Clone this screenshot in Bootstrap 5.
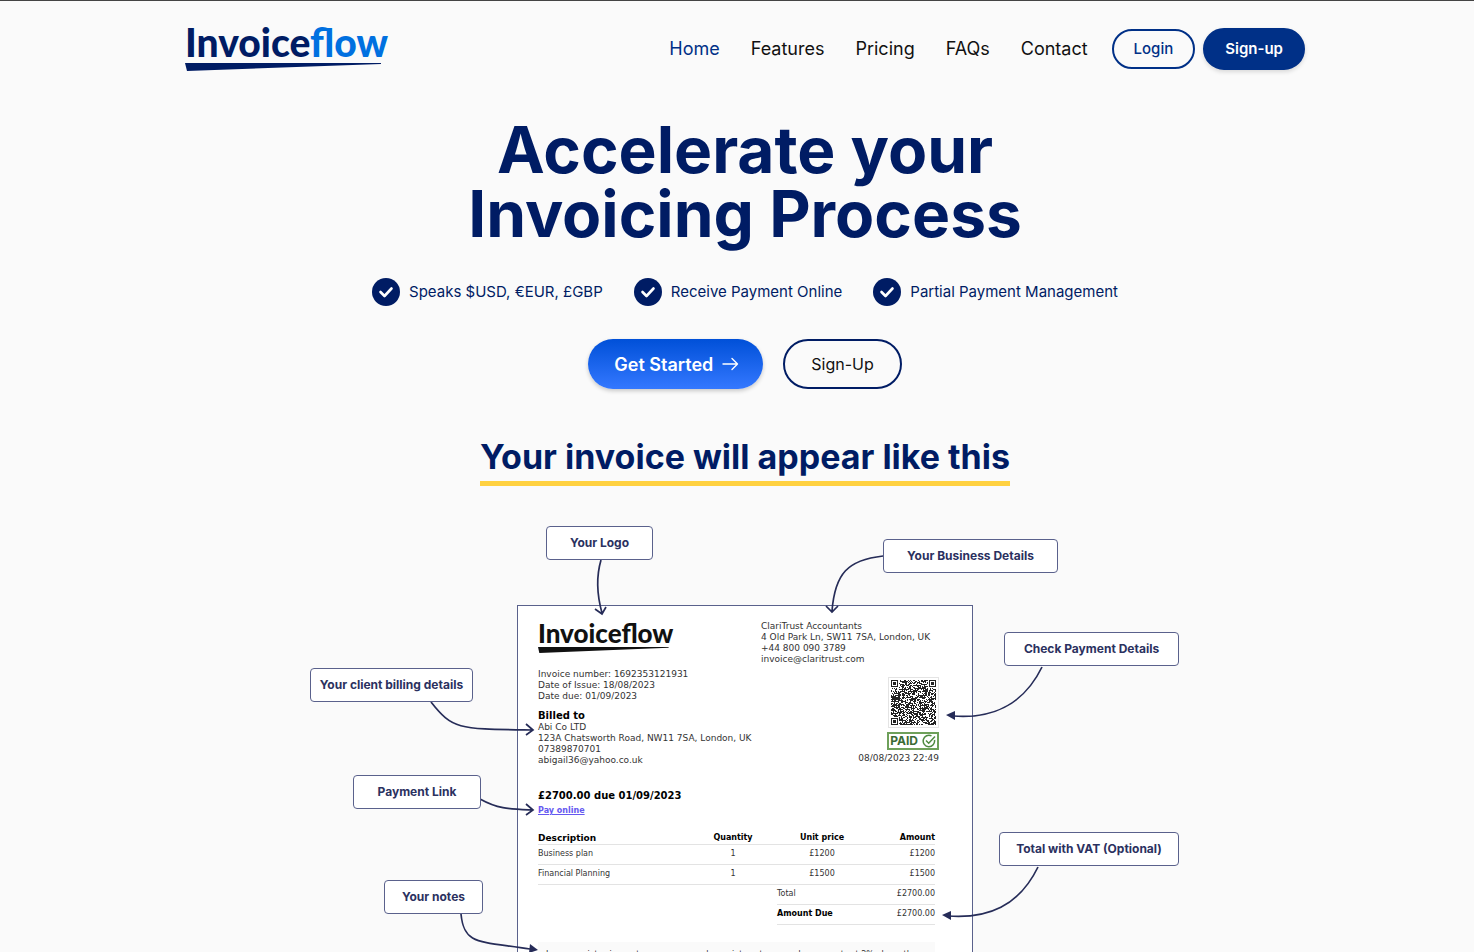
<!DOCTYPE html>
<html lang="en">
<head>
<meta charset="utf-8">
<meta name="viewport" content="width=device-width, initial-scale=1">
<title>Invoiceflow</title>
<link href="https://cdn.jsdelivr.net/npm/bootstrap@5.3.0/dist/css/bootstrap.min.css" rel="stylesheet">
<style>
:root{--navy:#001c64;--royal:#003087;--ink:#2b3160}
body{font-family:Inter,sans-serif;background:#fafafa;color:#111;border-top:1px solid #444;padding-left:16px;overflow-x:hidden}
.wrap{max-width:1120px}
.logo{font:900 39px/34px Lato,sans-serif;color:var(--navy);text-decoration:none;display:inline-block}
.logo svg{display:block;width:0;min-width:100%;height:8px;margin:4px 0 2px}
.logo span{color:#0070e0}
.site-nav{gap:31px}
.site-nav .nav-link{font-size:18px;line-height:24px;padding:0;color:#111}
.site-nav .nav-link.active{color:var(--royal)}
.pill{border-radius:32px;border:2px solid var(--royal);font-size:15px;line-height:20px;font-weight:500;color:var(--royal);padding:8px 20px}
.pill-solid{background:var(--royal);color:#fff;font-weight:600;padding:9px 20px;box-shadow:0 2px 4px #0002}
h1{font-size:64px;line-height:64px;font-weight:700;color:var(--navy);margin:45px 0 24px}
.points{font-size:15px;line-height:28px;color:var(--navy);gap:31px}
.points li{display:flex;gap:9px}
.actions{gap:20px;margin-top:33px}
.start{border:0;border-radius:32px;font-size:18px;font-weight:600;color:#fff;background:linear-gradient(#0050d8,#3478ff);height:50px;padding:0 24px 0 26px;box-shadow:0 2px 4px #0003}
.signup{border:2px solid var(--navy);border-radius:32px;background:none;font-size:16px;height:50px;padding:0 26px;color:#111}
h2{font-size:34px;line-height:44px;font-weight:700;color:var(--navy);border-bottom:5px solid #ffd140;padding-bottom:2px;margin:46px 0 40px}
.diagram{width:870px;padding:79px 207px 24px}
.sheet{background:#fff;border:1px solid #5a618c;padding:15px 37px 24px 20px;font:9px/11px "DejaVu Sans",sans-serif;color:#333}
.sheet .logo{font-size:26px;line-height:24px;color:#111}
.sheet .logo svg{height:6px;margin:2px 0 0}
.sheet strong{color:#000;font-size:10px}
.right-col{width:178px;margin-right:-4px}
.qr{width:51px;height:51px;border:1px solid #e4e4e4;padding:2px;margin-top:12px}
.paid{border:2px solid #6ea05a;color:#3b6b35;font:700 12px/14px Inter,sans-serif;padding:0 1px;margin:4px 0 3px}
.pay{color:#6558f0;font-size:8px;font-weight:700;display:block;margin:3px 0 16px}
.sheet table{font-size:8px;line-height:10px;width:100%}
.col-desc{width:151px}.col-qty{width:88px}.col-price{width:90px}
.sheet th{color:#000;padding:0;height:12px}
.sheet .desc{font-size:9px}
.sheet td,.sheet tbody th{height:20px;padding:0;vertical-align:middle}
.sheet tr>*{border-bottom:1px solid #e3e3e3}
.sheet .none{border:0}
.notes{background:#fafafa;font-size:8px;line-height:12px;padding:7px 8px;margin:17px 0 0}
.tag{position:absolute;height:34px;background:#fff;border:1px solid #5a618c;border-radius:4px;color:var(--ink);font-size:12px;font-weight:700;line-height:32px;text-align:center;white-space:nowrap}
.t-logo{left:236px;top:0;width:107px}.t-business{left:573px;top:13px;width:175px}.t-check{left:694px;top:106px;width:175px}.t-client{left:0;top:142px;width:163px}.t-link{left:43px;top:249px;width:128px}.t-total{left:689px;top:306px;width:180px}.t-notes{left:74px;top:354px;width:99px}
.arrows{position:absolute;left:0;top:0;pointer-events:none}
</style>
</head>
<body>
<header class="wrap mx-auto d-flex align-items-center justify-content-between pt-4">
  <a class="logo" href="#">Invoice<span>flow</span>
    <svg viewBox="0 0 200 8" preserveAspectRatio="none" aria-hidden="true"><path d="M0 0H193V1L2 8Z" fill="#001c64"/></svg></a>
  <div class="d-flex align-items-center gap-4">
    <nav class="site-nav nav" aria-label="Main">
      <a class="nav-link active" href="#">Home</a><a class="nav-link" href="#">Features</a><a class="nav-link" href="#">Pricing</a><a class="nav-link" href="#">FAQs</a><a class="nav-link" href="#">Contact</a>
    </nav>
    <div class="d-flex align-items-center gap-2"><button class="btn pill">Login</button><button class="btn pill pill-solid">Sign-up</button></div>
  </div>
</header>
<main class="wrap mx-auto d-flex flex-column align-items-center">
  <h1 class="text-center">Accelerate your<br>Invoicing Process</h1>
  <ul class="points list-unstyled d-flex flex-wrap justify-content-center mb-0 mt-2">
    <li><svg width="28" height="28" viewBox="0 0 28 28"><circle cx="14" cy="14" r="14" fill="#001c64"/><path d="M8.500 14l4 4 7-7.500" fill="none" stroke="#fff" stroke-width="2.600" stroke-linecap="round" stroke-linejoin="round"/></svg>Speaks $USD, €EUR, £GBP</li>
    <li><svg width="28" height="28" viewBox="0 0 28 28"><circle cx="14" cy="14" r="14" fill="#001c64"/><path d="M8.500 14l4 4 7-7.500" fill="none" stroke="#fff" stroke-width="2.600" stroke-linecap="round" stroke-linejoin="round"/></svg>Receive Payment Online</li>
    <li><svg width="28" height="28" viewBox="0 0 28 28"><circle cx="14" cy="14" r="14" fill="#001c64"/><path d="M8.500 14l4 4 7-7.500" fill="none" stroke="#fff" stroke-width="2.600" stroke-linecap="round" stroke-linejoin="round"/></svg>Partial Payment Management</li>
  </ul>
  <div class="actions d-flex">
    <button class="start d-flex align-items-center gap-2">Get Started<svg width="18" height="16" viewBox="0 0 18 16" fill="none" stroke="#fff" stroke-width="1.400" stroke-linecap="round" stroke-linejoin="round"><path d="M2 8h14M11 2.500L16.500 8 11 13.500"/></svg></button>
    <button class="signup">Sign-Up</button>
  </div>
  <h2>Your invoice will appear like this</h2>
  <div class="diagram position-relative">
    <article class="sheet">
      <div class="d-flex justify-content-between">
        <div>
          <div class="logo">Invoiceflow<svg viewBox="0 0 200 8" preserveAspectRatio="none" aria-hidden="true"><path d="M0 0H193V1L2 8Z" fill="#111"/></svg></div>
          <div class="mt-3">Invoice number: 1692353121931<br>Date of Issue: 18/08/2023<br>Date due: 01/09/2023</div>
          <div class="mt-2 text-nowrap"><strong>Billed to</strong><br>Abi Co LTD<br>123A Chatsworth Road, NW11 7SA, London, UK<br>07389870701<br>abigail36@yahoo.co.uk</div>
        </div>
        <div class="right-col flex-shrink-0 d-flex flex-column align-items-end text-nowrap">
          <div class="w-100">ClariTrust Accountants<br>4 Old Park Ln, SW11 7SA, London, UK<br>+44 800 090 3789<br>invoice@claritrust.com</div>
          <svg class="qr" viewBox="0 0 45 45" shape-rendering="crispEdges" role="img" aria-label="Payment QR code"><path id="qr" fill="#222"/></svg>
          <div class="paid d-flex gap-1 align-items-center">PAID<svg width="14" height="14" viewBox="0 0 14 14" fill="none" stroke="#4f8a41" stroke-width="1.500"><path d="M12.500 6A5.700 5.700 0 1 1 9.500 1.900M4 6.500l2.700 2.700L13 2.500"/></svg></div>
          <div>08/08/2023 22:49</div>
        </div>
      </div>
      <div class="mt-4"><strong>£2700.00 due 01/09/2023</strong></div>
      <a class="pay" href="#">Pay online</a>
      <table>
        <colgroup><col class="col-desc"><col class="col-qty"><col class="col-price"><col></colgroup>
        <thead><tr><th class="desc">Description</th><th class="text-center">Quantity</th><th class="text-center">Unit price</th><th class="text-end">Amount</th></tr></thead>
        <tbody>
          <tr><td>Business plan</td><td class="text-center">1</td><td class="text-center">£1200</td><td class="text-end">£1200</td></tr>
          <tr><td>Financial Planning</td><td class="text-center">1</td><td class="text-center">£1500</td><td class="text-end">£1500</td></tr>
          <tr><td class="none" colspan="2"></td><td>Total</td><td class="text-end">£2700.00</td></tr>
          <tr><td class="none" colspan="2"></td><th class="text-nowrap">Amount Due</th><td class="text-end">£2700.00</td></tr>
        </tbody>
      </table>
      <p class="notes">In appropriate circumstances, we may charge interest on overdue amounts at 2% above the</p>
    </article>
    <svg class="arrows" width="870" height="440" viewBox="310 526 870 440" fill="none" stroke="#262c58" stroke-width="1.700" aria-hidden="true">
      <path d="M601 560C596 577 597 595 602 613M595 609l7 5 4-7"/>
      <path d="M883 556C848 560 835 573 832 611M826 606l6 6 6-6"/>
      <path d="M1042 667C1023 706 990 719 953 716"/><path d="M946 715l9-4v9z" fill="#262c58" stroke="none"/>
      <path d="M431 702C453 730 459 729 532 730M526 724l7 6-7 5"/>
      <path d="M480 799C498 809 509 809 532 810M526 804l7 6-7 5"/>
      <path d="M1038 867C1019 906 988 919 948 916"/><path d="M942 915l9-4v9z" fill="#262c58" stroke="none"/>
      <path d="M461 914C464 945 478 941 530 949"/><path d="M538 950l-8-6-1 9z" fill="#262c58" stroke="none"/>
    </svg>
    <div class="tag t-logo">Your Logo</div><div class="tag t-business">Your Business Details</div><div class="tag t-check">Check Payment Details</div><div class="tag t-client">Your client billing details</div><div class="tag t-link">Payment Link</div><div class="tag t-total">Total with VAT (Optional)</div><div class="tag t-notes">Your notes</div>
  </div>
</main>
<script src="https://cdn.jsdelivr.net/npm/bootstrap@5.3.0/dist/js/bootstrap.bundle.min.js"></script>
<script>
// Fill the code's modules: three finder squares and a seeded pattern elsewhere
let seed = 7, d = '';
const n = 45, rand = () => (seed = seed * 16807 % 2147483647) / 2147483647;
const finder = (x, y) => { const r = Math.max(Math.abs(x - 3), Math.abs(y - 3)); return r === 3 || r < 2; };
for (let y = 0; y < n; y++) for (let x = 0; x < n; x++) {
  let on = rand() < .6;
  if (x < 8 && y < 8) on = x < 7 && y < 7 && finder(x, y);
  else if (x > 36 && y < 8) on = x > 37 && y < 7 && finder(x - 38, y);
  else if (x < 8 && y > 36) on = x < 7 && y > 37 && finder(x, y - 38);
  if (on) d += `M${x} ${y}h1v1h-1z`;
}
document.getElementById('qr').setAttribute('d', d);
</script>
</body>
</html>
